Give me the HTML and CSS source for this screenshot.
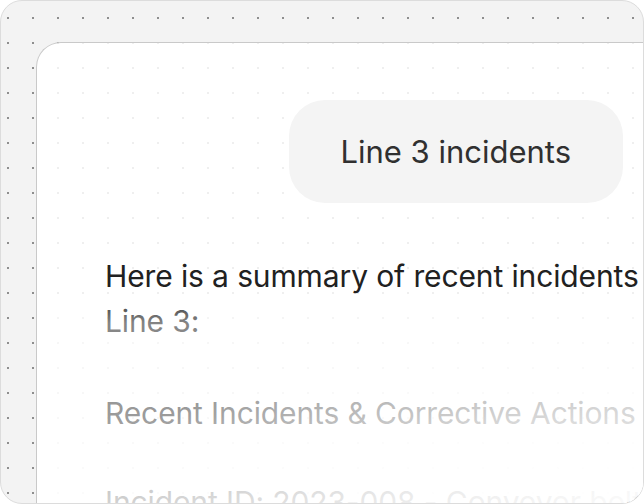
FILE: index.html
```html
<!DOCTYPE html>
<html lang="en">
<head>
<meta charset="utf-8">
<title>Line 3 incidents</title>
<link rel="stylesheet" href="styles.css">
</head>
<body>
<div class="frame">
  <div class="panel">
    <div class="bubble-row">
      <div class="bubble">Line 3 incidents</div>
    </div>
    <div class="answer">
      <p class="intro">Here is a summary of recent incidents on Line 3:</p>
      <h2 class="heading">Recent Incidents &amp; Corrective Actions</h2>
      <p class="item">Incident ID: 2023-008 - Conveyor belt misalignment</p>
    </div>
  </div>
</div>
</body>
</html>
```
FILE: styles.css
```css
* { box-sizing: border-box; }
html, body { margin: 0; padding: 0; background: #ffffff; }
body { width: 644px; height: 504px; overflow: hidden; font-family: Inter, "Noto Sans", sans-serif; }

.frame {
  width: 644px;
  height: 504px;
  border: 1px solid #dcdcdc;
  border-radius: 22px;
  overflow: hidden;
  padding: 41px 0 0 35px;
  background-color: #f3f3f3;
  background-image: radial-gradient(circle at 1px 1px, #8e8e8e 0.9px, rgba(142,142,142,0) 1.5px);
  background-size: 25px 25px;
  background-position: 6px 16px;
}

.panel {
  position: relative;
  width: 720px;
  height: 520px;
  background-color: #ffffff;
  background-image: radial-gradient(circle at 1px 1px, #efefef 0.9px, rgba(239,239,239,0) 1.5px);
  background-size: 25px 25px;
  background-position: 20px 24px;
  border-top: 1px solid #c9c9c9;
  border-left: 1px solid #c9c9c9;
  border-top-left-radius: 25px;
  padding: 57px 0 0 68px;
}

.panel::after {
  content: "";
  position: absolute;
  inset: 0;
  pointer-events: none;
  background:
    radial-gradient(520px 210px at 607px 461px, rgba(255,255,255,0.9) 0%, rgba(255,255,255,0.6) 45%, rgba(255,255,255,0) 100%),
    linear-gradient(to bottom, rgba(255,255,255,0) 0px, rgba(255,255,255,0) 250px, rgba(255,255,255,0.45) 280px, rgba(255,255,255,0.55) 372px, rgba(255,255,255,0.8) 461px);
}

.bubble-row {
  display: flex;
  width: 518px;
  justify-content: flex-end;
}

.bubble {
  background: #f4f4f4;
  border-radius: 36px;
  padding: 29px 52px 29px 51px;
  font-size: 31px;
  line-height: 45px;
  color: #303030;
  white-space: nowrap;
}

.answer {
  width: 600px;
  margin-top: 51px;
  color: #212121;
  font-size: 30px;
  line-height: 45px;
  letter-spacing: -0.12px;
}

.intro { margin: 0; }

.heading {
  margin: 47px 0 0 0;
  font-size: 30px;
  font-weight: 400;
  line-height: 45px;
  color: #212121;
  white-space: nowrap;
}

.item {
  margin: 44px 0 0 0;
  white-space: nowrap;
}
```
